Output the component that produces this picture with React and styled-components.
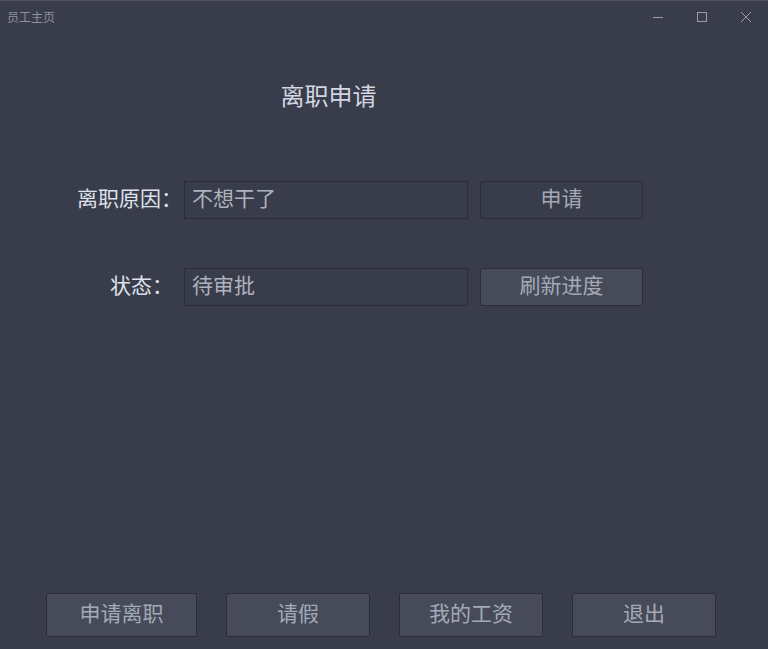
import React from 'react'
import styled, { createGlobalStyle } from 'styled-components'

const GlobalStyle = createGlobalStyle`
  html, body {
    margin: 0;
    padding: 0;
    background: #393c4a;
  }
  * {
    box-sizing: border-box;
  }
`

const Window = styled.div`
  width: 768px;
  height: 649px;
  display: flex;
  flex-direction: column;
  background: #393c4a;
  border-top: 1px solid #50535e;
  font-family: "Noto Sans CJK SC", "Noto Sans", sans-serif;
  overflow: hidden;
`

const TitleBar = styled.div`
  height: 31px;
  display: flex;
  align-items: center;
  padding-left: 7px;
`

const WindowTitle = styled.span`
  flex: 1;
  font-size: 12px;
  color: #8d9099;
`

const Controls = styled.div`
  display: flex;
  align-items: center;
`

const ControlButton = styled.div`
  width: 44px;
  height: 31px;
  display: flex;
  align-items: center;
  justify-content: center;
  color: #9a9da6;
`

const Heading = styled.h1`
  width: 657px;
  margin: 47px 0 0;
  font-size: 24px;
  line-height: 32px;
  font-weight: normal;
  text-align: center;
  color: #d2d7e2;
`

const Form = styled.div`
  display: flex;
  flex-direction: column;
  gap: 49px;
  margin-top: 70px;
`

const Row = styled.div`
  display: flex;
  align-items: center;
`

const Label = styled.label`
  width: 184px;
  padding: 0 ${p => p.$inset}px 6px 0;
  text-align: right;
  font-size: 21px;
  color: #dde1ea;
  white-space: nowrap;
`

const Field = styled.div`
  width: 284px;
  height: 38px;
  display: flex;
  align-items: center;
  padding: 0 0 7px 7px;
  border: 1px solid #2a2c37;
  font-size: 21px;
  color: #aeb3bd;
`

const Button = styled.div`
  width: ${p => p.$width}px;
  height: ${p => p.$height}px;
  display: flex;
  align-items: center;
  justify-content: center;
  padding-bottom: 7px;
  background: ${p => (p.$raised ? '#464a59' : '#393c4a')};
  border: 1px solid #2a2c37;
  border-radius: 2px;
  font-size: 21px;
  color: #a3aab6;
`

const SideButton = styled(Button)`
  margin-left: 12px;
`

const Footer = styled.div`
  margin-top: auto;
  display: flex;
  padding: 0 0 12px 46px;
  gap: 29px;
`

const Minimize = () => (
  <svg width="12" height="12" viewBox="0 0 12 12">
    <line x1="1" y1="6.5" x2="11" y2="6.5" stroke="currentColor" strokeWidth="1" />
  </svg>
)

const Maximize = () => (
  <svg width="12" height="12" viewBox="0 0 12 12">
    <rect x="1.5" y="1.5" width="9" height="9" fill="none" stroke="currentColor" strokeWidth="1" />
  </svg>
)

const Close = () => (
  <svg width="12" height="12" viewBox="0 0 12 12">
    <path d="M1 1 L11 11 M11 1 L1 11" stroke="currentColor" strokeWidth="1" />
  </svg>
)

const footerButtons = [
  { text: '申请离职', width: 151 },
  { text: '请假', width: 144 },
  { text: '我的工资', width: 144 },
  { text: '退出', width: 144 }
]

export default function App() {
  return (
    <>
      <GlobalStyle />
      <Window>
        <TitleBar>
          <WindowTitle>员工主页</WindowTitle>
          <Controls>
            <ControlButton><Minimize /></ControlButton>
            <ControlButton><Maximize /></ControlButton>
            <ControlButton><Close /></ControlButton>
          </Controls>
        </TitleBar>

        <Heading>离职申请</Heading>

        <Form>
          <Row>
            <Label $inset={2}>离职原因：</Label>
            <Field>不想干了</Field>
            <SideButton $width={163} $height={38}>申请</SideButton>
          </Row>
          <Row>
            <Label $inset={11}>状态：</Label>
            <Field>待审批</Field>
            <SideButton $width={163} $height={38} $raised>刷新进度</SideButton>
          </Row>
        </Form>

        <Footer>
          {footerButtons.map(b => (
            <Button key={b.text} $width={b.width} $height={44} $raised>
              {b.text}
            </Button>
          ))}
        </Footer>
      </Window>
    </>
  )
}
